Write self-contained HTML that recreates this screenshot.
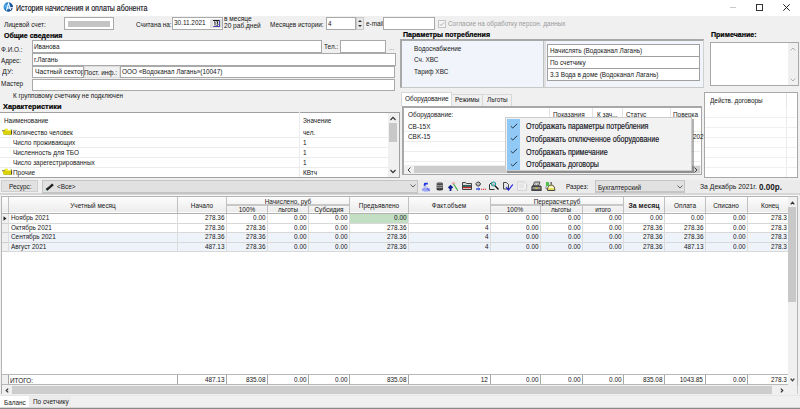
<!DOCTYPE html>
<html><head><meta charset="utf-8"><style>
html,body{margin:0;padding:0;}
body{width:800px;height:409px;position:relative;overflow:hidden;background:#f0f0f0;font-family:"Liberation Sans",sans-serif;}
.r{position:absolute;}
.t{position:absolute;white-space:nowrap;}
</style></head><body>
<div class="r" style="left:0px;top:0px;width:800px;height:16px;background:#fff;"></div>
<svg class="r" style="left:3px;top:2px" width="11" height="11" viewBox="0 0 11 11">
<defs><radialGradient id="ig" cx="25%" cy="40%" r="80%"><stop offset="0" stop-color="#5ab8f0"/><stop offset="0.5" stop-color="#1a70c0"/><stop offset="1" stop-color="#082a68"/></radialGradient></defs>
<circle cx="5.25" cy="5.05" r="4.7" fill="url(#ig)"/>
<path d="M3.4 8.3 L5.5 1.4 L7.6 8" stroke="#e8f4ff" stroke-width="1.2" fill="none"/>
<path d="M4 6.1 L9.9 5.6" stroke="#e8f4ff" stroke-width="1.1" fill="none"/>
</svg>
<div class="t" style="left:16px;top:4.19px;font-size:8.6px;line-height:8.6px;font-weight:400;color:#101018;transform:scaleX(0.815);transform-origin:0 0;-webkit-text-stroke:0.15px #101018;">История начисления и оплаты абонента</div>
<div class="r" style="left:730px;top:7px;width:6px;height:1px;background:#c8c8c8;"></div>
<div class="r" style="left:756px;top:4px;width:7px;height:7px;border:1px solid #333;box-sizing:border-box;"></div>
<svg class="r" style="left:783px;top:4px" width="7" height="7" viewBox="0 0 7 7"><path d="M0.3 0.3L6.7 6.7M6.7 0.3L0.3 6.7" stroke="#222" stroke-width="1"/></svg>
<div class="t" style="left:4px;top:20.50px;font-size:8px;line-height:8px;font-weight:400;color:#161616;transform:scaleX(0.8);transform-origin:0 0;">Лицевой счет:</div>
<div class="r" style="left:64px;top:17px;width:50px;height:13px;background:#fff;border:1px solid #a9a9a9;box-sizing:border-box;"></div>
<div class="r" style="left:68px;top:21px;width:42px;height:6px;background:#c4c4c4;"></div>
<div class="t" style="left:136px;top:20.50px;font-size:8px;line-height:8px;font-weight:400;color:#161616;transform:scaleX(0.8);transform-origin:0 0;">Считана на:</div>
<div class="r" style="left:172px;top:17px;width:51px;height:13px;background:#fff;border:1px solid #a9a9a9;box-sizing:border-box;"></div>
<div class="t" style="left:174px;top:19.20px;font-size:8px;line-height:8px;font-weight:400;color:#161616;transform:scaleX(0.8);transform-origin:0 0;">30.11.2021</div>
<div class="r" style="left:210px;top:18.5px;width:12px;height:9.5px;background:#e2e2e2;"></div>
<svg class="r" style="left:212px;top:19px" width="9" height="9" viewBox="0 0 9 9"><rect x="1" y="1" width="6.5" height="1" fill="#181818"/><rect x="1" y="2" width="6.5" height="5.5" fill="#f8f8f8"/><path d="M7.5 1.5 L7.5 7.5 L1.2 7.5" stroke="#4848b0" stroke-width="1.1" fill="none"/><path d="M2.2 3.2 L3 2.6 L3 6.6 M4.4 2.8 L6 2.8 L5 4.4 Q6.4 4.6 6 5.9 Q5.4 6.9 4.3 6.3" stroke="#101010" stroke-width="0.9" fill="none"/></svg>
<div class="t" style="left:224px;top:15.20px;font-size:8px;line-height:8px;font-weight:400;color:#161616;transform:scaleX(0.82);transform-origin:0 0;">в месяце</div>
<div class="t" style="left:224px;top:22.20px;font-size:8px;line-height:8px;font-weight:400;color:#161616;transform:scaleX(0.82);transform-origin:0 0;">20 раб.дней</div>
<div class="t" style="left:270px;top:20.70px;font-size:8px;line-height:8px;font-weight:400;color:#161616;transform:scaleX(0.8);transform-origin:0 0;">Месяцев истории:</div>
<div class="r" style="left:326px;top:17px;width:30px;height:13px;background:#fff;border:1px solid #a9a9a9;box-sizing:border-box;"></div>
<div class="t" style="left:328px;top:19.70px;font-size:8px;line-height:8px;font-weight:400;color:#161616;transform:scaleX(0.8);transform-origin:0 0;">4</div>
<div class="r" style="left:356px;top:17px;width:8px;height:13px;background:#e8e8e8;border:1px solid #c8c8c8;box-sizing:border-box;"></div>
<svg class="r" style="left:357px;top:18px" width="6" height="11" viewBox="0 0 6 11"><path d="M1 4L3 2L5 4Z M1 7L3 9L5 7Z" fill="#333"/></svg>
<div class="t" style="left:366px;top:20.20px;font-size:8px;line-height:8px;font-weight:400;color:#161616;transform:scaleX(0.8);transform-origin:0 0;">e-mail:</div>
<div class="r" style="left:383px;top:17px;width:52px;height:13px;background:#fff;border:1px solid #a9a9a9;box-sizing:border-box;"></div>
<div class="r" style="left:438px;top:20px;width:8px;height:8px;border:1px solid #c4c4c4;box-sizing:border-box;background:#f4f4f4;"></div>
<svg class="r" style="left:439px;top:21px" width="6" height="6" viewBox="0 0 6 6"><path d="M0.8 3L2.3 4.6L5.3 1.2" stroke="#b0b0b0" stroke-width="0.9" fill="none"/></svg>
<div class="t" style="left:448px;top:20.20px;font-size:8px;line-height:8px;font-weight:400;color:#9a9a9a;transform:scaleX(0.8);transform-origin:0 0;">Согласие на обработку персон. данных</div>
<div class="t" style="left:4px;top:32.20px;font-size:8px;line-height:8px;font-weight:700;color:#000;transform:scaleX(0.87);transform-origin:0 0;-webkit-text-stroke:0.2px #000;">Общие сведения</div>
<div class="t" style="left:403px;top:31.00px;font-size:8px;line-height:8px;font-weight:700;color:#000;transform:scaleX(0.88);transform-origin:0 0;-webkit-text-stroke:0.2px #000;">Параметры потребления</div>
<div class="t" style="left:711px;top:30.70px;font-size:8px;line-height:8px;font-weight:700;color:#000;transform:scaleX(0.88);transform-origin:0 0;-webkit-text-stroke:0.2px #000;">Примечание:</div>
<div class="t" style="left:1px;top:45.70px;font-size:8px;line-height:8px;font-weight:400;color:#161616;transform:scaleX(0.8);transform-origin:0 0;">Ф.И.О.:</div>
<div class="r" style="left:32px;top:40px;width:290px;height:13px;background:#fff;border:1px solid #a9a9a9;box-sizing:border-box;"></div>
<div class="t" style="left:34px;top:42.90px;font-size:8px;line-height:8px;font-weight:400;color:#161616;transform:scaleX(0.8);transform-origin:0 0;">Иванова</div>
<div class="t" style="left:324px;top:43.20px;font-size:8px;line-height:8px;font-weight:400;color:#161616;transform:scaleX(0.8);transform-origin:0 0;">Тел.:</div>
<div class="r" style="left:340px;top:40px;width:46px;height:13px;background:#fff;border:1px solid #a9a9a9;box-sizing:border-box;"></div>
<div class="t" style="left:389px;top:43.70px;font-size:8px;line-height:8px;font-weight:400;color:#808080;transform:scaleX(0.8);transform-origin:0 0;">...</div>
<div class="t" style="left:1px;top:57.10px;font-size:8px;line-height:8px;font-weight:400;color:#161616;transform:scaleX(0.8);transform-origin:0 0;">Адрес:</div>
<div class="r" style="left:32px;top:53px;width:364px;height:13px;background:#fff;border:1px solid #a9a9a9;box-sizing:border-box;"></div>
<div class="t" style="left:34px;top:55.90px;font-size:8px;line-height:8px;font-weight:400;color:#161616;transform:scaleX(0.8);transform-origin:0 0;">г.Лагань</div>
<div class="t" style="left:1.5px;top:68.20px;font-size:8px;line-height:8px;font-weight:400;color:#161616;transform:scaleX(0.9);transform-origin:0 0;">ДУ:</div>
<div class="r" style="left:32px;top:66px;width:52px;height:12px;background:#fff;border:1px solid #a9a9a9;box-sizing:border-box;"></div>
<div class="r" style="left:33px;top:67px;width:50px;height:10px;overflow:hidden">
<div class="t" style="left:1.5px;top:1.30px;font-size:8px;line-height:8px;font-weight:400;color:#161616;transform:scaleX(0.84);transform-origin:0 0;">Частный сектор</div>
</div>
<div class="r" style="left:84px;top:66px;width:36px;height:12px;border:1px solid #dcdcdc;box-sizing:border-box;"></div>
<div class="t" style="left:84px;top:68.70px;font-size:8px;line-height:8px;font-weight:400;color:#161616;transform:scaleX(0.8);transform-origin:0 0;">Пост. инф.:</div>
<div class="r" style="left:120px;top:66px;width:275px;height:12px;background:#fff;border:1px solid #a9a9a9;box-sizing:border-box;"></div>
<div class="t" style="left:122px;top:68.20px;font-size:8px;line-height:8px;font-weight:400;color:#161616;transform:scaleX(0.8);transform-origin:0 0;">ООО «Водоканал Лагань»(10047)</div>
<div class="t" style="left:1.3px;top:80.00px;font-size:8px;line-height:8px;font-weight:400;color:#161616;transform:scaleX(0.8);transform-origin:0 0;">Мастер</div>
<div class="r" style="left:32px;top:79px;width:363px;height:12px;background:#fff;border:1px solid #a9a9a9;box-sizing:border-box;"></div>
<div class="t" style="left:12.5px;top:92.20px;font-size:8px;line-height:8px;font-weight:400;color:#161616;transform:scaleX(0.8);transform-origin:0 0;">К групповому счетчику не подключен</div>
<div class="t" style="left:3px;top:103.10px;font-size:8px;line-height:8px;font-weight:700;color:#000;transform:scaleX(0.92);transform-origin:0 0;-webkit-text-stroke:0.2px #000;">Характеристики</div>
<div class="r" style="left:0px;top:112px;width:400px;height:66px;background:#fff;border-top:1px solid #a0a0a0;border-right:1px solid #a0a0a0;border-bottom:1px solid #a0a0a0;box-sizing:border-box;"></div>
<div class="r" style="left:299px;top:112px;width:1px;height:65px;background:#ececec;"></div>
<div class="t" style="left:4px;top:117.20px;font-size:8px;line-height:8px;font-weight:400;color:#161616;transform:scaleX(0.8);transform-origin:0 0;">Наименование</div>
<div class="t" style="left:303px;top:116.70px;font-size:8px;line-height:8px;font-weight:400;color:#161616;transform:scaleX(0.8);transform-origin:0 0;">Значение</div>
<div class="r" style="left:0px;top:137px;width:388px;height:1px;background:#ececec;"></div>
<div class="r" style="left:0px;top:147px;width:388px;height:1px;background:#ececec;"></div>
<div class="r" style="left:0px;top:157px;width:388px;height:1px;background:#ececec;"></div>
<div class="r" style="left:0px;top:167px;width:388px;height:1px;background:#ececec;"></div>
<svg class="r" style="left:2px;top:127.7px" width="11" height="7" viewBox="0 0 11 7"><ellipse cx="4.2" cy="1.6" rx="1.9" ry="1.2" fill="#f0ec30"/><path d="M0.3 2.6 L9.5 2.6 L9.5 6.6 L1.5 6.6 Z" fill="#dcd400"/><path d="M0 2.6 L3 2.6" stroke="#707050" stroke-width="0.8"/><path d="M9.6 1.6 L9.6 6.6" stroke="#303020" stroke-width="0.9"/><circle cx="8.6" cy="2.2" r="0.8" fill="#f0ec30"/><path d="M1.5 6.6 L9.5 6.6" stroke="#a8a000" stroke-width="0.6"/></svg>
<div class="t" style="left:13px;top:128.70px;font-size:8px;line-height:8px;font-weight:400;color:#161616;transform:scaleX(0.8);transform-origin:0 0;">Количество человек</div>
<div class="t" style="left:303px;top:128.70px;font-size:8px;line-height:8px;font-weight:400;color:#161616;transform:scaleX(0.8);transform-origin:0 0;">чел.</div>
<div class="t" style="left:13px;top:138.70px;font-size:8px;line-height:8px;font-weight:400;color:#161616;transform:scaleX(0.8);transform-origin:0 0;">Число проживающих</div>
<div class="t" style="left:303px;top:138.70px;font-size:8px;line-height:8px;font-weight:400;color:#161616;transform:scaleX(0.8);transform-origin:0 0;">1</div>
<div class="t" style="left:13px;top:148.70px;font-size:8px;line-height:8px;font-weight:400;color:#161616;transform:scaleX(0.8);transform-origin:0 0;">Численность для ТБО</div>
<div class="t" style="left:303px;top:148.70px;font-size:8px;line-height:8px;font-weight:400;color:#161616;transform:scaleX(0.8);transform-origin:0 0;">1</div>
<div class="t" style="left:13px;top:158.70px;font-size:8px;line-height:8px;font-weight:400;color:#161616;transform:scaleX(0.8);transform-origin:0 0;">Число зарегестрированных</div>
<div class="t" style="left:303px;top:158.70px;font-size:8px;line-height:8px;font-weight:400;color:#161616;transform:scaleX(0.8);transform-origin:0 0;">1</div>
<svg class="r" style="left:2px;top:167.7px" width="11" height="7" viewBox="0 0 11 7"><ellipse cx="4.2" cy="1.6" rx="1.9" ry="1.2" fill="#f0ec30"/><path d="M0.3 2.6 L9.5 2.6 L9.5 6.6 L1.5 6.6 Z" fill="#dcd400"/><path d="M0 2.6 L3 2.6" stroke="#707050" stroke-width="0.8"/><path d="M9.6 1.6 L9.6 6.6" stroke="#303020" stroke-width="0.9"/><circle cx="8.6" cy="2.2" r="0.8" fill="#f0ec30"/><path d="M1.5 6.6 L9.5 6.6" stroke="#a8a000" stroke-width="0.6"/></svg>
<div class="t" style="left:13px;top:168.70px;font-size:8px;line-height:8px;font-weight:400;color:#161616;transform:scaleX(0.8);transform-origin:0 0;">Прочие</div>
<div class="t" style="left:303px;top:168.70px;font-size:8px;line-height:8px;font-weight:400;color:#161616;transform:scaleX(0.8);transform-origin:0 0;">КВтч</div>
<div class="r" style="left:388px;top:113px;width:11px;height:64px;background:#f0f0f0;"></div>
<div class="r" style="left:389px;top:123px;width:8px;height:19px;background:#c8c8c8;"></div>
<svg class="r" style="left:390px;top:116px" width="6" height="5" viewBox="0 0 6 5"><path d="M0.5 4L3 1.3L5.5 4" stroke="#333" stroke-width="1.2" fill="none"/></svg>
<svg class="r" style="left:390px;top:169px" width="6" height="5" viewBox="0 0 6 5"><path d="M0.5 1L3 3.7L5.5 1" stroke="#333" stroke-width="1.2" fill="none"/></svg>
<div class="r" style="left:400px;top:39px;width:304px;height:49px;background:#f1f5fb;border-top:2px solid #a8a8a8;border-left:2px solid #a8a8a8;border-bottom:1px solid #c8c8c8;border-right:1px solid #d0d0d0;box-sizing:border-box;"></div>
<div class="t" style="left:414px;top:44.70px;font-size:8px;line-height:8px;font-weight:400;color:#161616;transform:scaleX(0.8);transform-origin:0 0;">Водоснабжение</div>
<div class="t" style="left:414px;top:56.20px;font-size:8px;line-height:8px;font-weight:400;color:#161616;transform:scaleX(0.8);transform-origin:0 0;">Сч. ХВС</div>
<div class="t" style="left:414px;top:67.70px;font-size:8px;line-height:8px;font-weight:400;color:#161616;transform:scaleX(0.8);transform-origin:0 0;">Тариф ХВС</div>
<div class="r" style="left:543px;top:41px;width:3px;height:46px;background:#e0e0e0;border-left:1px solid #c0c0c0;box-sizing:border-box;"></div>
<div class="r" style="left:547px;top:44px;width:153px;height:37px;background:#fff;border:1px solid #a0a0a0;box-sizing:border-box;"></div>
<div class="r" style="left:547px;top:56px;width:153px;height:1px;background:#a0a0a0;"></div>
<div class="r" style="left:547px;top:68px;width:153px;height:1px;background:#a0a0a0;"></div>
<div class="t" style="left:550px;top:46.70px;font-size:8px;line-height:8px;font-weight:400;color:#161616;transform:scaleX(0.8);transform-origin:0 0;">Начислять (Водоканал Лагань)</div>
<div class="t" style="left:550px;top:58.70px;font-size:8px;line-height:8px;font-weight:400;color:#161616;transform:scaleX(0.8);transform-origin:0 0;">По счетчику</div>
<div class="t" style="left:550px;top:70.70px;font-size:8px;line-height:8px;font-weight:400;color:#161616;transform:scaleX(0.8);transform-origin:0 0;">3.3 Вода в доме (Водоканал Лагань)</div>
<div class="r" style="left:710px;top:42px;width:89px;height:44px;background:#fff;border:1px solid #a8a8a8;box-sizing:border-box;"></div>
<div class="r" style="left:788px;top:43px;width:10px;height:42px;background:#f0f0f0;"></div>
<svg class="r" style="left:790px;top:47px" width="6" height="4" viewBox="0 0 6 4"><path d="M0.5 3.5L3 1L5.5 3.5" stroke="#aaa" stroke-width="0.9" fill="none"/></svg>
<svg class="r" style="left:790px;top:78px" width="6" height="4" viewBox="0 0 6 4"><path d="M0.5 0.5L3 3L5.5 0.5" stroke="#aaa" stroke-width="0.9" fill="none"/></svg>
<div class="r" style="left:401px;top:92px;width:51px;height:14px;background:#fff;border:1px solid #d8d8d8;border-bottom:none;box-sizing:border-box;"></div>
<div class="t" style="left:405px;top:95.20px;font-size:8px;line-height:8px;font-weight:400;color:#161616;transform:scaleX(0.8);transform-origin:0 0;">Оборудование</div>
<div class="r" style="left:452px;top:94px;width:31px;height:12px;background:#f0f0f0;border:1px solid #d8d8d8;border-bottom:none;border-left:none;box-sizing:border-box;"></div>
<div class="t" style="left:455px;top:95.70px;font-size:8px;line-height:8px;font-weight:400;color:#161616;transform:scaleX(0.8);transform-origin:0 0;">Режимы</div>
<div class="r" style="left:483px;top:94px;width:29px;height:12px;background:#f0f0f0;border:1px solid #d8d8d8;border-bottom:none;border-left:none;box-sizing:border-box;"></div>
<div class="t" style="left:487px;top:95.70px;font-size:8px;line-height:8px;font-weight:400;color:#161616;transform:scaleX(0.8);transform-origin:0 0;">Льготы</div>
<div class="r" style="left:402px;top:106px;width:300px;height:69px;background:#fff;border:2px solid #a8a8a8;border-right-width:1px;border-bottom-width:1px;box-sizing:border-box;"></div>
<div class="t" style="left:407.5px;top:111.20px;font-size:8px;line-height:8px;font-weight:400;color:#161616;transform:scaleX(0.8);transform-origin:0 0;">Оборудование:</div>
<div class="r" style="left:549px;top:108px;width:1px;height:13px;background:#e4e4e4;"></div>
<div class="r" style="left:592px;top:108px;width:1px;height:13px;background:#e4e4e4;"></div>
<div class="r" style="left:622px;top:108px;width:1px;height:13px;background:#e4e4e4;"></div>
<div class="r" style="left:670px;top:108px;width:1px;height:13px;background:#e4e4e4;"></div>
<div class="t" style="left:552.5px;top:111.20px;font-size:8px;line-height:8px;font-weight:400;color:#161616;transform:scaleX(0.8);transform-origin:0 0;">Показания</div>
<div class="t" style="left:597px;top:111.20px;font-size:8px;line-height:8px;font-weight:400;color:#161616;transform:scaleX(0.8);transform-origin:0 0;">К зач...</div>
<div class="t" style="left:626px;top:111.20px;font-size:8px;line-height:8px;font-weight:400;color:#161616;transform:scaleX(0.8);transform-origin:0 0;">Статус</div>
<div class="t" style="left:673px;top:111.20px;font-size:8px;line-height:8px;font-weight:400;color:#161616;transform:scaleX(0.8);transform-origin:0 0;">Поверка</div>
<div class="t" style="left:407.5px;top:123.20px;font-size:8px;line-height:8px;font-weight:400;color:#161616;transform:scaleX(0.8);transform-origin:0 0;">CB-15X</div>
<div class="t" style="left:407.5px;top:133.20px;font-size:8px;line-height:8px;font-weight:400;color:#161616;transform:scaleX(0.8);transform-origin:0 0;">CBK-15</div>
<div class="r" style="left:404px;top:131px;width:296px;height:1px;background:#ececec;"></div>
<div class="r" style="left:404px;top:141px;width:296px;height:1px;background:#ececec;"></div>
<div class="r" style="left:404px;top:151px;width:296px;height:1px;background:#ececec;"></div>
<div class="r" style="left:404px;top:161px;width:296px;height:1px;background:#ececec;"></div>
<div class="t" style="left:692.5px;top:132.70px;font-size:8px;line-height:8px;font-weight:400;color:#161616;transform:scaleX(0.8);transform-origin:0 0;">2021</div>
<div class="r" style="left:404px;top:165px;width:297px;height:9px;background:#f0f0f0;"></div>
<div class="r" style="left:414px;top:166px;width:286px;height:7px;background:#cdcdcd;"></div>
<svg class="r" style="left:407px;top:167px" width="4" height="6" viewBox="0 0 4 6"><path d="M3.5 0.5L1 3L3.5 5.5" stroke="#444" stroke-width="1" fill="none"/></svg>
<svg class="r" style="left:694px;top:167px" width="4" height="6" viewBox="0 0 4 6"><path d="M0.5 0.5L3 3L0.5 5.5" stroke="#444" stroke-width="1" fill="none"/></svg>
<div class="r" style="left:704px;top:92px;width:94px;height:86px;background:#fff;border:1px solid #a8a8a8;box-sizing:border-box;"></div>
<div class="t" style="left:709.5px;top:96.50px;font-size:8px;line-height:8px;font-weight:400;color:#161616;transform:scaleX(0.8);transform-origin:0 0;">Действ. договоры</div>
<div class="r" style="left:786px;top:93px;width:1px;height:14px;background:#e4e4e4;"></div>
<div class="r" style="left:786px;top:107px;width:1px;height:70px;background:#ebebeb;"></div>
<div class="r" style="left:705px;top:117px;width:92px;height:1px;background:#f0f0f0;"></div>
<div class="r" style="left:705px;top:127px;width:92px;height:1px;background:#f0f0f0;"></div>
<div class="r" style="left:705px;top:137px;width:92px;height:1px;background:#f0f0f0;"></div>
<div class="r" style="left:705px;top:147px;width:92px;height:1px;background:#f0f0f0;"></div>
<div class="r" style="left:705px;top:157px;width:92px;height:1px;background:#f0f0f0;"></div>
<div class="r" style="left:705px;top:167px;width:92px;height:1px;background:#f0f0f0;"></div>
<div class="r" style="left:507px;top:119px;width:187px;height:54px;background:rgba(0,0,0,0.3);"></div>
<div class="r" style="left:505px;top:117px;width:187px;height:54px;background:#f2f2f2;border:1px solid #cccccc;box-sizing:border-box;"></div>
<div class="r" style="left:507px;top:119px;width:13px;height:51px;background:#90c8f6;"></div>
<svg class="r" style="left:510px;top:122.5px" width="8" height="6" viewBox="0 0 8 6"><path d="M0.8 3.2L2.8 5L7.2 0.8" stroke="#2a3a4a" stroke-width="1" fill="none"/></svg>
<div class="t" style="left:525.5px;top:121.78px;font-size:8.5px;line-height:8.5px;font-weight:400;color:#101020;transform:scaleX(0.832);transform-origin:0 0;-webkit-text-stroke:0.15px #101020;">Отображать параметры потребления</div>
<svg class="r" style="left:510px;top:135.4px" width="8" height="6" viewBox="0 0 8 6"><path d="M0.8 3.2L2.8 5L7.2 0.8" stroke="#2a3a4a" stroke-width="1" fill="none"/></svg>
<div class="t" style="left:525.5px;top:134.68px;font-size:8.5px;line-height:8.5px;font-weight:400;color:#101020;transform:scaleX(0.832);transform-origin:0 0;-webkit-text-stroke:0.15px #101020;">Отображать отключенное оборудование</div>
<svg class="r" style="left:510px;top:148.3px" width="8" height="6" viewBox="0 0 8 6"><path d="M0.8 3.2L2.8 5L7.2 0.8" stroke="#2a3a4a" stroke-width="1" fill="none"/></svg>
<div class="t" style="left:525.5px;top:147.58px;font-size:8.5px;line-height:8.5px;font-weight:400;color:#101020;transform:scaleX(0.832);transform-origin:0 0;-webkit-text-stroke:0.15px #101020;">Отображать примечание</div>
<svg class="r" style="left:510px;top:161.2px" width="8" height="6" viewBox="0 0 8 6"><path d="M0.8 3.2L2.8 5L7.2 0.8" stroke="#2a3a4a" stroke-width="1" fill="none"/></svg>
<div class="t" style="left:525.5px;top:160.47px;font-size:8.5px;line-height:8.5px;font-weight:400;color:#101020;transform:scaleX(0.832);transform-origin:0 0;-webkit-text-stroke:0.15px #101020;">Отображать договоры</div>
<div class="r" style="left:0px;top:192.5px;width:800px;height:2.0px;background:#d6d6d6;"></div>
<div class="r" style="left:418px;top:180px;width:382px;height:12.5px;background:#ebebeb;"></div>
<div class="r" style="left:1px;top:180px;width:37px;height:12px;background:#e1e1e1;border:1px solid #cfcfcf;box-sizing:border-box;"></div>
<div class="t" style="left:8.5px;top:182.70px;font-size:8px;line-height:8px;font-weight:400;color:#161616;transform:scaleX(0.8);transform-origin:0 0;">Ресурс:</div>
<div class="r" style="left:42px;top:180px;width:376px;height:14px;background:#e1e1e1;border:1px solid #c4c4c4;border-bottom-width:2px;box-sizing:border-box;"></div>
<svg class="r" style="left:44px;top:182px" width="11" height="10" viewBox="0 0 11 10"><path d="M1.6 8.6 L8 3" stroke="#a8e0a8" stroke-width="1.2"/><path d="M2.5 7.9 L9 2.3" stroke="#1e1e1e" stroke-width="2.4"/><path d="M4.3 5.6 L6.8 3.5" stroke="#707070" stroke-width="0.5"/></svg>
<div class="t" style="left:56.5px;top:183.20px;font-size:8px;line-height:8px;font-weight:400;color:#161616;transform:scaleX(0.8);transform-origin:0 0;">&lt;Все&gt;</div>
<svg class="r" style="left:410px;top:184px" width="6" height="4" viewBox="0 0 6 4"><path d="M0.5 0.5L3 3L5.5 0.5" stroke="#555" stroke-width="0.9" fill="none"/></svg>
<svg class="r" style="left:421px;top:182px" width="10" height="10" viewBox="0 0 10 10"><path d="M2.8 4.2 L2.8 2.2 Q2.8 0.8 4.5 0.8 L6.8 0.8 L6.8 2.5 L4.6 2.5 L4.6 4.2 Z" fill="#1a30e0"/><ellipse cx="5" cy="7.4" rx="4.2" ry="2" fill="#9aa4f4"/><ellipse cx="4.5" cy="4.8" rx="1.6" ry="1.4" fill="#c0c4f0"/><path d="M6.2 6.5 L8.5 8.8" stroke="#3040e0" stroke-width="1"/></svg>
<svg class="r" style="left:436px;top:182px" width="8" height="9" viewBox="0 0 8 9"><ellipse cx="3.8" cy="1.6" rx="3.2" ry="1.3" fill="#707070"/><rect x="0.6" y="1.6" width="6.4" height="5.6" fill="#4a4a4a"/><ellipse cx="3.8" cy="7.2" rx="3.2" ry="1.2" fill="#3a3a3a"/><path d="M0.8 3.3 Q3.8 4.5 6.8 3.3 M0.8 5.2 Q3.8 6.4 6.8 5.2" stroke="#c8c8c8" stroke-width="0.7" fill="none"/></svg>
<svg class="r" style="left:448px;top:182px" width="11" height="9" viewBox="0 0 11 9"><path d="M2.5 9 L2.5 5 M0.5 6 L2.5 4 L4.5 6" stroke="#102090" stroke-width="1.8" fill="none"/><path d="M4 2 L5.5 0.5 L7 2" stroke="#f0a0a0" stroke-width="1.3" fill="none"/><path d="M5.5 2 L9.5 8" stroke="#40b040" stroke-width="1.2"/><path d="M9.5 8.5 L10 9" stroke="#303030" stroke-width="1"/></svg>
<svg class="r" style="left:462px;top:181px" width="10" height="9" viewBox="0 0 10 9"><path d="M0.5 1.5 L3.5 1.5 L4.5 2.5 L9.5 2.5 L9.5 8.5 L0.5 8.5 Z" fill="#d8d8d8" stroke="#303030" stroke-width="0.9"/><rect x="1" y="4" width="8" height="2" fill="#306060"/><rect x="1" y="6" width="8" height="1.2" fill="#d02020"/></svg>
<svg class="r" style="left:475px;top:181px" width="12" height="10" viewBox="0 0 12 10"><path d="M1 2.5 L2.5 1 L4 1 L5.5 2.5 L5 4.2 L3 5.2 L1.2 4 Z" fill="#c8c8c8" stroke="#2a2a2a" stroke-width="0.9"/><path d="M2 4.5 L4.5 2" stroke="#888" stroke-width="0.6"/><path d="M1 8 L4.5 8" stroke="#2040e0" stroke-width="1.3"/><path d="M3.5 6.8 L5 8 L3.5 9.2" stroke="#2040e0" stroke-width="0.8" fill="none"/><path d="M6 8.3 L11.5 8.3" stroke="#e02020" stroke-width="1.1" stroke-dasharray="1.2 0.7"/></svg>
<svg class="r" style="left:488px;top:181px" width="12" height="10" viewBox="0 0 12 10"><path d="M1.5 3.5 L3 2 L5 2 M1.5 3.5 L1.5 8.5 L6.5 8.5" stroke="#303030" stroke-width="1" fill="#e8e8e8"/><circle cx="5.5" cy="3" r="2" fill="#e0e0e0" stroke="#20a0a0" stroke-width="1.2"/><circle cx="5.3" cy="3.2" r="0.5" fill="#c04040"/><path d="M7 4.8 L10.5 8.5" stroke="#101010" stroke-width="1.3"/></svg>
<svg class="r" style="left:502px;top:181px" width="12" height="10" viewBox="0 0 12 10"><path d="M1.5 1.5 L4.5 1.5 L6.5 3.5 L6.5 8 L1.5 8 Z" fill="#e4e4e4" stroke="#353535" stroke-width="0.9"/><path d="M4.3 6.2 L6.5 9 L10.8 3.5" stroke="#1a1ae0" stroke-width="1.2" fill="none"/></svg>
<svg class="r" style="left:516px;top:181px" width="12" height="10" viewBox="0 0 12 10"><path d="M1.5 0.8 L8 0.8 L10.5 3 L10.5 9.3 L1.5 9.3 Z" fill="#f2f2f2" stroke="#cfcfcf" stroke-width="0.9"/><path d="M3 3 L8 3 M3 4.8 L8 4.8 M3 6.6 L8 6.6" stroke="#d8d8d8" stroke-width="0.8"/><path d="M10.5 4.5 L11.5 5" stroke="#bbb" stroke-width="0.8"/></svg>
<svg class="r" style="left:531px;top:181px" width="11" height="10" viewBox="0 0 11 10"><path d="M3.5 1 L9 1 L7.5 5 L2 5 Z" fill="#d0d0d0" stroke="#404040" stroke-width="0.9"/><path d="M5 2.2 L4.3 4 M7 2.2 L6.3 4" stroke="#888" stroke-width="0.6"/><path d="M1 5 L10 5 L10.3 9.5 L0.7 9.5 Z" fill="#5a5a5a" stroke="#2a2a2a" stroke-width="0.8"/><path d="M1.5 7 L9.5 7" stroke="#d8d8d8" stroke-width="0.9"/><rect x="4.5" y="6.6" width="2" height="1.2" fill="#e8e020"/></svg>
<svg class="r" style="left:545px;top:181px" width="11" height="11" viewBox="0 0 11 11"><path d="M1 1 L4 1 L4 5 L1 5 Z" fill="#50c050"/><path d="M1 5 L1 8 L2.5 8" stroke="#606060" stroke-width="0.7" fill="none"/><path d="M5.5 1 L6.8 1 L6.8 3.5 L5.5 3.5 Z" fill="#505050"/><path d="M2.5 9.5 Q2.5 4 6.2 4 Q9.8 4 9.8 9.5 Z" fill="#f0e860" stroke="#353535" stroke-width="0.9"/><path d="M3.8 7 Q6.2 4.8 8.5 7" stroke="#fff" stroke-width="1.1" fill="none"/><path d="M3 8.3 L9.3 8.3" stroke="#c8c040" stroke-width="0.6"/></svg>
<div class="t" style="left:566px;top:183.20px;font-size:8px;line-height:8px;font-weight:400;color:#161616;transform:scaleX(0.8);transform-origin:0 0;">Разрез:</div>
<div class="r" style="left:595px;top:180px;width:90px;height:13px;background:#e1e1e1;border:1px solid #c4c4c4;border-bottom-width:2px;box-sizing:border-box;"></div>
<div class="t" style="left:597.5px;top:183.90px;font-size:8px;line-height:8px;font-weight:400;color:#161616;transform:scaleX(0.8);transform-origin:0 0;">Бухгалтерский</div>
<svg class="r" style="left:677px;top:185px" width="6" height="4" viewBox="0 0 6 4"><path d="M0.5 0.5L3 3L5.5 0.5" stroke="#555" stroke-width="0.9" fill="none"/></svg>
<div class="t" style="left:699.5px;top:183.10px;font-size:8px;line-height:8px;font-weight:400;color:#161616;transform:scaleX(0.85);transform-origin:0 0;">За Декабрь 2021г.</div>
<div class="t" style="left:759px;top:183.15px;font-size:9px;line-height:9px;font-weight:700;color:#161616;transform:scaleX(0.9);transform-origin:0 0;">0.00р.</div>
<div class="r" style="left:1px;top:196px;width:797px;height:189px;background:#fff;border:1px solid #b4b4b4;border-bottom:none;box-sizing:border-box;"></div>
<div class="r" style="left:1px;top:195px;width:797px;height:1px;background:#f8f8f8;"></div>
<div class="r" style="left:2px;top:197px;width:786px;height:15px;background:linear-gradient(#fdfdfd,#ececec);"></div>
<div class="r" style="left:2px;top:213px;width:786px;height:1px;background:#b0b0b0;"></div>
<div class="r" style="left:226px;top:204px;width:123px;height:2px;background:#c8c8c8;"></div>
<div class="r" style="left:490px;top:204px;width:133px;height:2px;background:#c8c8c8;"></div>
<div class="r" style="left:8px;top:197px;width:1px;height:16px;background:#c0c0c0;"></div>
<div class="r" style="left:177px;top:197px;width:1px;height:16px;background:#c0c0c0;"></div>
<div class="r" style="left:226px;top:197px;width:1px;height:16px;background:#c0c0c0;"></div>
<div class="r" style="left:267px;top:205px;width:1px;height:8px;background:#c0c0c0;"></div>
<div class="r" style="left:308px;top:205px;width:1px;height:8px;background:#c0c0c0;"></div>
<div class="r" style="left:349px;top:197px;width:1px;height:16px;background:#c0c0c0;"></div>
<div class="r" style="left:408px;top:197px;width:1px;height:16px;background:#c0c0c0;"></div>
<div class="r" style="left:490px;top:197px;width:1px;height:16px;background:#c0c0c0;"></div>
<div class="r" style="left:540px;top:205px;width:1px;height:8px;background:#c0c0c0;"></div>
<div class="r" style="left:582px;top:205px;width:1px;height:8px;background:#c0c0c0;"></div>
<div class="r" style="left:623px;top:197px;width:1px;height:16px;background:#c0c0c0;"></div>
<div class="r" style="left:664px;top:197px;width:1px;height:16px;background:#c0c0c0;"></div>
<div class="r" style="left:705px;top:197px;width:1px;height:16px;background:#c0c0c0;"></div>
<div class="r" style="left:747px;top:197px;width:1px;height:16px;background:#c0c0c0;"></div>
<div class="t" style="left:92.5px;top:202.20px;font-size:8px;line-height:8px;font-weight:400;color:#161616;transform:translateX(-50%) scaleX(0.8);transform-origin:50% 0;">Учетный месяц</div>
<div class="t" style="left:201.5px;top:202.20px;font-size:8px;line-height:8px;font-weight:400;color:#161616;transform:translateX(-50%) scaleX(0.8);transform-origin:50% 0;">Начало</div>
<div class="t" style="left:378.5px;top:202.20px;font-size:8px;line-height:8px;font-weight:400;color:#161616;transform:translateX(-50%) scaleX(0.8);transform-origin:50% 0;">Предъявлено</div>
<div class="t" style="left:449.0px;top:202.20px;font-size:8px;line-height:8px;font-weight:400;color:#161616;transform:translateX(-50%) scaleX(0.8);transform-origin:50% 0;">Факт.объем</div>
<div class="t" style="left:684.5px;top:202.20px;font-size:8px;line-height:8px;font-weight:400;color:#161616;transform:translateX(-50%) scaleX(0.8);transform-origin:50% 0;">Оплата</div>
<div class="t" style="left:726.0px;top:202.20px;font-size:8px;line-height:8px;font-weight:400;color:#161616;transform:translateX(-50%) scaleX(0.8);transform-origin:50% 0;">Списано</div>
<div class="t" style="left:769.5px;top:202.20px;font-size:8px;line-height:8px;font-weight:400;color:#161616;transform:translateX(-50%) scaleX(0.8);transform-origin:50% 0;">Конец</div>
<div class="t" style="left:644.0px;top:202.20px;font-size:8px;line-height:8px;font-weight:700;color:#202020;transform:translateX(-50%) scaleX(0.86);transform-origin:50% 0;">За месяц</div>
<div class="t" style="left:288px;top:197.70px;font-size:8px;line-height:8px;font-weight:400;color:#161616;transform:translateX(-50%) scaleX(0.8);transform-origin:50% 0;">Начислено, руб</div>
<div class="t" style="left:556.5px;top:197.70px;font-size:8px;line-height:8px;font-weight:400;color:#161616;transform:translateX(-50%) scaleX(0.8);transform-origin:50% 0;">Перерасчет,руб</div>
<div class="t" style="left:246.5px;top:205.70px;font-size:8px;line-height:8px;font-weight:400;color:#161616;transform:translateX(-50%) scaleX(0.8);transform-origin:50% 0;">100%</div>
<div class="t" style="left:287.5px;top:205.70px;font-size:8px;line-height:8px;font-weight:400;color:#161616;transform:translateX(-50%) scaleX(0.8);transform-origin:50% 0;">льготы</div>
<div class="t" style="left:328.5px;top:205.70px;font-size:8px;line-height:8px;font-weight:400;color:#161616;transform:translateX(-50%) scaleX(0.8);transform-origin:50% 0;">Субсидия</div>
<div class="t" style="left:515.0px;top:205.70px;font-size:8px;line-height:8px;font-weight:400;color:#161616;transform:translateX(-50%) scaleX(0.8);transform-origin:50% 0;">100%</div>
<div class="t" style="left:561.0px;top:205.70px;font-size:8px;line-height:8px;font-weight:400;color:#161616;transform:translateX(-50%) scaleX(0.8);transform-origin:50% 0;">льготы</div>
<div class="t" style="left:602.5px;top:205.70px;font-size:8px;line-height:8px;font-weight:400;color:#161616;transform:translateX(-50%) scaleX(0.8);transform-origin:50% 0;">итого</div>
<div class="r" style="left:350px;top:214px;width:58px;height:8.5px;background:#c3dfc3;"></div>
<div class="r" style="left:2px;top:222.5px;width:786px;height:1.0px;background:#d8d8d8;"></div>
<div class="r" style="left:8px;top:214px;width:1px;height:9.5px;background:#dcdcdc;"></div>
<div class="r" style="left:177px;top:214px;width:1px;height:9.5px;background:#dcdcdc;"></div>
<div class="r" style="left:226px;top:214px;width:1px;height:9.5px;background:#dcdcdc;"></div>
<div class="r" style="left:267px;top:214px;width:1px;height:9.5px;background:#dcdcdc;"></div>
<div class="r" style="left:308px;top:214px;width:1px;height:9.5px;background:#dcdcdc;"></div>
<div class="r" style="left:349px;top:214px;width:1px;height:9.5px;background:#dcdcdc;"></div>
<div class="r" style="left:408px;top:214px;width:1px;height:9.5px;background:#dcdcdc;"></div>
<div class="r" style="left:490px;top:214px;width:1px;height:9.5px;background:#dcdcdc;"></div>
<div class="r" style="left:540px;top:214px;width:1px;height:9.5px;background:#dcdcdc;"></div>
<div class="r" style="left:582px;top:214px;width:1px;height:9.5px;background:#dcdcdc;"></div>
<div class="r" style="left:623px;top:214px;width:1px;height:9.5px;background:#dcdcdc;"></div>
<div class="r" style="left:664px;top:214px;width:1px;height:9.5px;background:#dcdcdc;"></div>
<div class="r" style="left:705px;top:214px;width:1px;height:9.5px;background:#dcdcdc;"></div>
<div class="r" style="left:747px;top:214px;width:1px;height:9.5px;background:#dcdcdc;"></div>
<div class="t" style="left:10.5px;top:214.10px;font-size:8px;line-height:8px;font-weight:400;color:#161616;transform:scaleX(0.8);transform-origin:0 0;">Ноябрь 2021</div>
<div class="t" style="right:575.8px;top:214.10px;font-size:8px;line-height:8px;font-weight:400;color:#161616;transform:scaleX(0.8);transform-origin:100% 0;">278.36</div>
<div class="t" style="right:534.8px;top:214.10px;font-size:8px;line-height:8px;font-weight:400;color:#161616;transform:scaleX(0.8);transform-origin:100% 0;">0.00</div>
<div class="t" style="right:493.8px;top:214.10px;font-size:8px;line-height:8px;font-weight:400;color:#161616;transform:scaleX(0.8);transform-origin:100% 0;">0.00</div>
<div class="t" style="right:452.8px;top:214.10px;font-size:8px;line-height:8px;font-weight:400;color:#161616;transform:scaleX(0.8);transform-origin:100% 0;">0.00</div>
<div class="t" style="right:393.8px;top:214.10px;font-size:8px;line-height:8px;font-weight:400;color:#161616;transform:scaleX(0.8);transform-origin:100% 0;">0.00</div>
<div class="t" style="right:311.8px;top:214.10px;font-size:8px;line-height:8px;font-weight:400;color:#161616;transform:scaleX(0.8);transform-origin:100% 0;">0</div>
<div class="t" style="right:261.79999999999995px;top:214.10px;font-size:8px;line-height:8px;font-weight:400;color:#161616;transform:scaleX(0.8);transform-origin:100% 0;">0.00</div>
<div class="t" style="right:219.79999999999995px;top:214.10px;font-size:8px;line-height:8px;font-weight:400;color:#161616;transform:scaleX(0.8);transform-origin:100% 0;">0.00</div>
<div class="t" style="right:178.79999999999995px;top:214.10px;font-size:8px;line-height:8px;font-weight:400;color:#161616;transform:scaleX(0.8);transform-origin:100% 0;">0.00</div>
<div class="t" style="right:137.79999999999995px;top:214.10px;font-size:8px;line-height:8px;font-weight:400;color:#161616;transform:scaleX(0.8);transform-origin:100% 0;">0.00</div>
<div class="t" style="right:96.79999999999995px;top:214.10px;font-size:8px;line-height:8px;font-weight:400;color:#161616;transform:scaleX(0.8);transform-origin:100% 0;">0.00</div>
<div class="t" style="right:54.799999999999955px;top:214.10px;font-size:8px;line-height:8px;font-weight:400;color:#161616;transform:scaleX(0.8);transform-origin:100% 0;">0.00</div>
<div class="t" style="right:9.799999999999955px;top:214.10px;font-size:8px;line-height:8px;font-weight:400;color:#161616;transform:scaleX(0.8);transform-origin:100% 0;">278.36</div>
<div class="r" style="left:2px;top:232.2px;width:786px;height:1.0px;background:#d8d8d8;"></div>
<div class="r" style="left:8px;top:223.5px;width:1px;height:9.699999999999989px;background:#dcdcdc;"></div>
<div class="r" style="left:177px;top:223.5px;width:1px;height:9.699999999999989px;background:#dcdcdc;"></div>
<div class="r" style="left:226px;top:223.5px;width:1px;height:9.699999999999989px;background:#dcdcdc;"></div>
<div class="r" style="left:267px;top:223.5px;width:1px;height:9.699999999999989px;background:#dcdcdc;"></div>
<div class="r" style="left:308px;top:223.5px;width:1px;height:9.699999999999989px;background:#dcdcdc;"></div>
<div class="r" style="left:349px;top:223.5px;width:1px;height:9.699999999999989px;background:#dcdcdc;"></div>
<div class="r" style="left:408px;top:223.5px;width:1px;height:9.699999999999989px;background:#dcdcdc;"></div>
<div class="r" style="left:490px;top:223.5px;width:1px;height:9.699999999999989px;background:#dcdcdc;"></div>
<div class="r" style="left:540px;top:223.5px;width:1px;height:9.699999999999989px;background:#dcdcdc;"></div>
<div class="r" style="left:582px;top:223.5px;width:1px;height:9.699999999999989px;background:#dcdcdc;"></div>
<div class="r" style="left:623px;top:223.5px;width:1px;height:9.699999999999989px;background:#dcdcdc;"></div>
<div class="r" style="left:664px;top:223.5px;width:1px;height:9.699999999999989px;background:#dcdcdc;"></div>
<div class="r" style="left:705px;top:223.5px;width:1px;height:9.699999999999989px;background:#dcdcdc;"></div>
<div class="r" style="left:747px;top:223.5px;width:1px;height:9.699999999999989px;background:#dcdcdc;"></div>
<div class="t" style="left:10.5px;top:223.60px;font-size:8px;line-height:8px;font-weight:400;color:#161616;transform:scaleX(0.8);transform-origin:0 0;">Октябрь 2021</div>
<div class="t" style="right:575.8px;top:223.60px;font-size:8px;line-height:8px;font-weight:400;color:#161616;transform:scaleX(0.8);transform-origin:100% 0;">278.36</div>
<div class="t" style="right:534.8px;top:223.60px;font-size:8px;line-height:8px;font-weight:400;color:#161616;transform:scaleX(0.8);transform-origin:100% 0;">278.36</div>
<div class="t" style="right:493.8px;top:223.60px;font-size:8px;line-height:8px;font-weight:400;color:#161616;transform:scaleX(0.8);transform-origin:100% 0;">0.00</div>
<div class="t" style="right:452.8px;top:223.60px;font-size:8px;line-height:8px;font-weight:400;color:#161616;transform:scaleX(0.8);transform-origin:100% 0;">0.00</div>
<div class="t" style="right:393.8px;top:223.60px;font-size:8px;line-height:8px;font-weight:400;color:#161616;transform:scaleX(0.8);transform-origin:100% 0;">278.36</div>
<div class="t" style="right:311.8px;top:223.60px;font-size:8px;line-height:8px;font-weight:400;color:#161616;transform:scaleX(0.8);transform-origin:100% 0;">4</div>
<div class="t" style="right:261.79999999999995px;top:223.60px;font-size:8px;line-height:8px;font-weight:400;color:#161616;transform:scaleX(0.8);transform-origin:100% 0;">0.00</div>
<div class="t" style="right:219.79999999999995px;top:223.60px;font-size:8px;line-height:8px;font-weight:400;color:#161616;transform:scaleX(0.8);transform-origin:100% 0;">0.00</div>
<div class="t" style="right:178.79999999999995px;top:223.60px;font-size:8px;line-height:8px;font-weight:400;color:#161616;transform:scaleX(0.8);transform-origin:100% 0;">0.00</div>
<div class="t" style="right:137.79999999999995px;top:223.60px;font-size:8px;line-height:8px;font-weight:400;color:#161616;transform:scaleX(0.8);transform-origin:100% 0;">278.36</div>
<div class="t" style="right:96.79999999999995px;top:223.60px;font-size:8px;line-height:8px;font-weight:400;color:#161616;transform:scaleX(0.8);transform-origin:100% 0;">278.36</div>
<div class="t" style="right:54.799999999999955px;top:223.60px;font-size:8px;line-height:8px;font-weight:400;color:#161616;transform:scaleX(0.8);transform-origin:100% 0;">0.00</div>
<div class="t" style="right:9.799999999999955px;top:223.60px;font-size:8px;line-height:8px;font-weight:400;color:#161616;transform:scaleX(0.8);transform-origin:100% 0;">278.36</div>
<div class="r" style="left:8px;top:233.2px;width:780px;height:9.400000000000006px;background:#eef3fa;"></div>
<div class="r" style="left:2px;top:241.6px;width:786px;height:1.0px;background:#d8d8d8;"></div>
<div class="r" style="left:8px;top:233.2px;width:1px;height:9.400000000000006px;background:#dcdcdc;"></div>
<div class="r" style="left:177px;top:233.2px;width:1px;height:9.400000000000006px;background:#dcdcdc;"></div>
<div class="r" style="left:226px;top:233.2px;width:1px;height:9.400000000000006px;background:#dcdcdc;"></div>
<div class="r" style="left:267px;top:233.2px;width:1px;height:9.400000000000006px;background:#dcdcdc;"></div>
<div class="r" style="left:308px;top:233.2px;width:1px;height:9.400000000000006px;background:#dcdcdc;"></div>
<div class="r" style="left:349px;top:233.2px;width:1px;height:9.400000000000006px;background:#dcdcdc;"></div>
<div class="r" style="left:408px;top:233.2px;width:1px;height:9.400000000000006px;background:#dcdcdc;"></div>
<div class="r" style="left:490px;top:233.2px;width:1px;height:9.400000000000006px;background:#dcdcdc;"></div>
<div class="r" style="left:540px;top:233.2px;width:1px;height:9.400000000000006px;background:#dcdcdc;"></div>
<div class="r" style="left:582px;top:233.2px;width:1px;height:9.400000000000006px;background:#dcdcdc;"></div>
<div class="r" style="left:623px;top:233.2px;width:1px;height:9.400000000000006px;background:#dcdcdc;"></div>
<div class="r" style="left:664px;top:233.2px;width:1px;height:9.400000000000006px;background:#dcdcdc;"></div>
<div class="r" style="left:705px;top:233.2px;width:1px;height:9.400000000000006px;background:#dcdcdc;"></div>
<div class="r" style="left:747px;top:233.2px;width:1px;height:9.400000000000006px;background:#dcdcdc;"></div>
<div class="t" style="left:10.5px;top:233.30px;font-size:8px;line-height:8px;font-weight:400;color:#161616;transform:scaleX(0.8);transform-origin:0 0;">Сентябрь 2021</div>
<div class="t" style="right:575.8px;top:233.30px;font-size:8px;line-height:8px;font-weight:400;color:#161616;transform:scaleX(0.8);transform-origin:100% 0;">278.36</div>
<div class="t" style="right:534.8px;top:233.30px;font-size:8px;line-height:8px;font-weight:400;color:#161616;transform:scaleX(0.8);transform-origin:100% 0;">278.36</div>
<div class="t" style="right:493.8px;top:233.30px;font-size:8px;line-height:8px;font-weight:400;color:#161616;transform:scaleX(0.8);transform-origin:100% 0;">0.00</div>
<div class="t" style="right:452.8px;top:233.30px;font-size:8px;line-height:8px;font-weight:400;color:#161616;transform:scaleX(0.8);transform-origin:100% 0;">0.00</div>
<div class="t" style="right:393.8px;top:233.30px;font-size:8px;line-height:8px;font-weight:400;color:#161616;transform:scaleX(0.8);transform-origin:100% 0;">278.36</div>
<div class="t" style="right:311.8px;top:233.30px;font-size:8px;line-height:8px;font-weight:400;color:#161616;transform:scaleX(0.8);transform-origin:100% 0;">4</div>
<div class="t" style="right:261.79999999999995px;top:233.30px;font-size:8px;line-height:8px;font-weight:400;color:#161616;transform:scaleX(0.8);transform-origin:100% 0;">0.00</div>
<div class="t" style="right:219.79999999999995px;top:233.30px;font-size:8px;line-height:8px;font-weight:400;color:#161616;transform:scaleX(0.8);transform-origin:100% 0;">0.00</div>
<div class="t" style="right:178.79999999999995px;top:233.30px;font-size:8px;line-height:8px;font-weight:400;color:#161616;transform:scaleX(0.8);transform-origin:100% 0;">0.00</div>
<div class="t" style="right:137.79999999999995px;top:233.30px;font-size:8px;line-height:8px;font-weight:400;color:#161616;transform:scaleX(0.8);transform-origin:100% 0;">278.36</div>
<div class="t" style="right:96.79999999999995px;top:233.30px;font-size:8px;line-height:8px;font-weight:400;color:#161616;transform:scaleX(0.8);transform-origin:100% 0;">278.36</div>
<div class="t" style="right:54.799999999999955px;top:233.30px;font-size:8px;line-height:8px;font-weight:400;color:#161616;transform:scaleX(0.8);transform-origin:100% 0;">0.00</div>
<div class="t" style="right:9.799999999999955px;top:233.30px;font-size:8px;line-height:8px;font-weight:400;color:#161616;transform:scaleX(0.8);transform-origin:100% 0;">278.36</div>
<div class="r" style="left:8px;top:242.6px;width:780px;height:8.900000000000006px;background:#eef3fa;"></div>
<div class="r" style="left:2px;top:250.5px;width:786px;height:1.0px;background:#d8d8d8;"></div>
<div class="r" style="left:8px;top:242.6px;width:1px;height:8.900000000000006px;background:#dcdcdc;"></div>
<div class="r" style="left:177px;top:242.6px;width:1px;height:8.900000000000006px;background:#dcdcdc;"></div>
<div class="r" style="left:226px;top:242.6px;width:1px;height:8.900000000000006px;background:#dcdcdc;"></div>
<div class="r" style="left:267px;top:242.6px;width:1px;height:8.900000000000006px;background:#dcdcdc;"></div>
<div class="r" style="left:308px;top:242.6px;width:1px;height:8.900000000000006px;background:#dcdcdc;"></div>
<div class="r" style="left:349px;top:242.6px;width:1px;height:8.900000000000006px;background:#dcdcdc;"></div>
<div class="r" style="left:408px;top:242.6px;width:1px;height:8.900000000000006px;background:#dcdcdc;"></div>
<div class="r" style="left:490px;top:242.6px;width:1px;height:8.900000000000006px;background:#dcdcdc;"></div>
<div class="r" style="left:540px;top:242.6px;width:1px;height:8.900000000000006px;background:#dcdcdc;"></div>
<div class="r" style="left:582px;top:242.6px;width:1px;height:8.900000000000006px;background:#dcdcdc;"></div>
<div class="r" style="left:623px;top:242.6px;width:1px;height:8.900000000000006px;background:#dcdcdc;"></div>
<div class="r" style="left:664px;top:242.6px;width:1px;height:8.900000000000006px;background:#dcdcdc;"></div>
<div class="r" style="left:705px;top:242.6px;width:1px;height:8.900000000000006px;background:#dcdcdc;"></div>
<div class="r" style="left:747px;top:242.6px;width:1px;height:8.900000000000006px;background:#dcdcdc;"></div>
<div class="t" style="left:10.5px;top:242.70px;font-size:8px;line-height:8px;font-weight:400;color:#161616;transform:scaleX(0.8);transform-origin:0 0;">Август 2021</div>
<div class="t" style="right:575.8px;top:242.70px;font-size:8px;line-height:8px;font-weight:400;color:#161616;transform:scaleX(0.8);transform-origin:100% 0;">487.13</div>
<div class="t" style="right:534.8px;top:242.70px;font-size:8px;line-height:8px;font-weight:400;color:#161616;transform:scaleX(0.8);transform-origin:100% 0;">278.36</div>
<div class="t" style="right:493.8px;top:242.70px;font-size:8px;line-height:8px;font-weight:400;color:#161616;transform:scaleX(0.8);transform-origin:100% 0;">0.00</div>
<div class="t" style="right:452.8px;top:242.70px;font-size:8px;line-height:8px;font-weight:400;color:#161616;transform:scaleX(0.8);transform-origin:100% 0;">0.00</div>
<div class="t" style="right:393.8px;top:242.70px;font-size:8px;line-height:8px;font-weight:400;color:#161616;transform:scaleX(0.8);transform-origin:100% 0;">278.36</div>
<div class="t" style="right:311.8px;top:242.70px;font-size:8px;line-height:8px;font-weight:400;color:#161616;transform:scaleX(0.8);transform-origin:100% 0;">4</div>
<div class="t" style="right:261.79999999999995px;top:242.70px;font-size:8px;line-height:8px;font-weight:400;color:#161616;transform:scaleX(0.8);transform-origin:100% 0;">0.00</div>
<div class="t" style="right:219.79999999999995px;top:242.70px;font-size:8px;line-height:8px;font-weight:400;color:#161616;transform:scaleX(0.8);transform-origin:100% 0;">0.00</div>
<div class="t" style="right:178.79999999999995px;top:242.70px;font-size:8px;line-height:8px;font-weight:400;color:#161616;transform:scaleX(0.8);transform-origin:100% 0;">0.00</div>
<div class="t" style="right:137.79999999999995px;top:242.70px;font-size:8px;line-height:8px;font-weight:400;color:#161616;transform:scaleX(0.8);transform-origin:100% 0;">278.36</div>
<div class="t" style="right:96.79999999999995px;top:242.70px;font-size:8px;line-height:8px;font-weight:400;color:#161616;transform:scaleX(0.8);transform-origin:100% 0;">487.13</div>
<div class="t" style="right:54.799999999999955px;top:242.70px;font-size:8px;line-height:8px;font-weight:400;color:#161616;transform:scaleX(0.8);transform-origin:100% 0;">0.00</div>
<div class="t" style="right:9.799999999999955px;top:242.70px;font-size:8px;line-height:8px;font-weight:400;color:#161616;transform:scaleX(0.8);transform-origin:100% 0;">278.36</div>
<div class="r" style="left:2px;top:214px;width:6px;height:37px;background:#f0f0f0;"></div>
<div class="r" style="left:2px;top:222.5px;width:6px;height:1.0px;background:#d0d0d0;"></div>
<div class="r" style="left:2px;top:232.2px;width:6px;height:1.0px;background:#d0d0d0;"></div>
<div class="r" style="left:2px;top:241.6px;width:6px;height:1.0px;background:#d0d0d0;"></div>
<div class="r" style="left:2px;top:250.5px;width:6px;height:1.0px;background:#d0d0d0;"></div>
<svg class="r" style="left:3px;top:216px" width="4" height="5" viewBox="0 0 4 5"><path d="M0.5 0.3L3.5 2.5L0.5 4.7Z" fill="#202020"/></svg>
<div class="r" style="left:787px;top:214px;width:1px;height:8.5px;background:#fff;"></div>
<div class="r" style="left:787px;top:223.5px;width:1px;height:8.699999999999989px;background:#fff;"></div>
<div class="r" style="left:787px;top:233.2px;width:1px;height:8.400000000000006px;background:#eef3fa;"></div>
<div class="r" style="left:787px;top:242.6px;width:1px;height:7.900000000000006px;background:#eef3fa;"></div>
<div class="r" style="left:788px;top:197px;width:9px;height:178px;background:#f0f0f0;"></div>
<div class="r" style="left:788px;top:207px;width:8px;height:95px;background:#c8c8c8;"></div>
<svg class="r" style="left:790px;top:200.5px" width="5" height="4" viewBox="0 0 5 4"><path d="M0.7 3.3L2.5 1.2L4.3 3.3" stroke="#333" stroke-width="1.2" fill="none"/></svg>
<div class="r" style="left:2px;top:374px;width:786px;height:11px;background:#fff;border-top:1px solid #b8b8b8;border-bottom:1px solid #b8b8b8;box-sizing:border-box;"></div>
<div class="r" style="left:2px;top:375px;width:6px;height:9px;background:#f0f0f0;"></div>
<div class="r" style="left:8px;top:375px;width:1px;height:9px;background:#a8a8a8;"></div>
<div class="r" style="left:177px;top:375px;width:1px;height:9px;background:#a8a8a8;"></div>
<div class="r" style="left:226px;top:375px;width:1px;height:9px;background:#a8a8a8;"></div>
<div class="r" style="left:267px;top:375px;width:1px;height:9px;background:#a8a8a8;"></div>
<div class="r" style="left:308px;top:375px;width:1px;height:9px;background:#a8a8a8;"></div>
<div class="r" style="left:349px;top:375px;width:1px;height:9px;background:#a8a8a8;"></div>
<div class="r" style="left:408px;top:375px;width:1px;height:9px;background:#a8a8a8;"></div>
<div class="r" style="left:490px;top:375px;width:1px;height:9px;background:#a8a8a8;"></div>
<div class="r" style="left:540px;top:375px;width:1px;height:9px;background:#a8a8a8;"></div>
<div class="r" style="left:582px;top:375px;width:1px;height:9px;background:#a8a8a8;"></div>
<div class="r" style="left:623px;top:375px;width:1px;height:9px;background:#a8a8a8;"></div>
<div class="r" style="left:664px;top:375px;width:1px;height:9px;background:#a8a8a8;"></div>
<div class="r" style="left:705px;top:375px;width:1px;height:9px;background:#a8a8a8;"></div>
<div class="r" style="left:747px;top:375px;width:1px;height:9px;background:#a8a8a8;"></div>
<div class="t" style="left:10px;top:376.70px;font-size:8px;line-height:8px;font-weight:400;color:#161616;transform:scaleX(0.8);transform-origin:0 0;">ИТОГО:</div>
<div class="t" style="right:575.8px;top:376.20px;font-size:8px;line-height:8px;font-weight:400;color:#161616;transform:scaleX(0.8);transform-origin:100% 0;">487.13</div>
<div class="t" style="right:534.8px;top:376.20px;font-size:8px;line-height:8px;font-weight:400;color:#161616;transform:scaleX(0.8);transform-origin:100% 0;">835.08</div>
<div class="t" style="right:493.8px;top:376.20px;font-size:8px;line-height:8px;font-weight:400;color:#161616;transform:scaleX(0.8);transform-origin:100% 0;">0.00</div>
<div class="t" style="right:452.8px;top:376.20px;font-size:8px;line-height:8px;font-weight:400;color:#161616;transform:scaleX(0.8);transform-origin:100% 0;">0.00</div>
<div class="t" style="right:393.8px;top:376.20px;font-size:8px;line-height:8px;font-weight:400;color:#161616;transform:scaleX(0.8);transform-origin:100% 0;">835.08</div>
<div class="t" style="right:311.8px;top:376.20px;font-size:8px;line-height:8px;font-weight:400;color:#161616;transform:scaleX(0.8);transform-origin:100% 0;">12</div>
<div class="t" style="right:261.79999999999995px;top:376.20px;font-size:8px;line-height:8px;font-weight:400;color:#161616;transform:scaleX(0.8);transform-origin:100% 0;">0.00</div>
<div class="t" style="right:219.79999999999995px;top:376.20px;font-size:8px;line-height:8px;font-weight:400;color:#161616;transform:scaleX(0.8);transform-origin:100% 0;">0.00</div>
<div class="t" style="right:178.79999999999995px;top:376.20px;font-size:8px;line-height:8px;font-weight:400;color:#161616;transform:scaleX(0.8);transform-origin:100% 0;">0.00</div>
<div class="t" style="right:137.79999999999995px;top:376.20px;font-size:8px;line-height:8px;font-weight:400;color:#161616;transform:scaleX(0.8);transform-origin:100% 0;">835.08</div>
<div class="t" style="right:96.79999999999995px;top:376.20px;font-size:8px;line-height:8px;font-weight:400;color:#161616;transform:scaleX(0.8);transform-origin:100% 0;">1043.85</div>
<div class="t" style="right:54.799999999999955px;top:376.20px;font-size:8px;line-height:8px;font-weight:400;color:#161616;transform:scaleX(0.8);transform-origin:100% 0;">0.00</div>
<div class="t" style="right:9.799999999999955px;top:376.20px;font-size:8px;line-height:8px;font-weight:400;color:#161616;transform:scaleX(0.8);transform-origin:100% 0;">278.36</div>
<div class="r" style="left:788px;top:375px;width:9px;height:10px;background:#f0f0f0;"></div>
<div class="r" style="left:787px;top:375px;width:1px;height:9px;background:#fff;"></div>
<svg class="r" style="left:790px;top:377.5px" width="5" height="4" viewBox="0 0 5 4"><path d="M0.7 0.7L2.5 2.8L4.3 0.7" stroke="#333" stroke-width="1.2" fill="none"/></svg>
<div class="r" style="left:1px;top:385px;width:797px;height:9px;background:#f0f0f0;border-left:1px solid #a8a8a8;border-right:1px solid #c8c8c8;box-sizing:border-box;"></div>
<div class="r" style="left:12px;top:386px;width:760px;height:7.5px;background:#cdcdcd;"></div>
<svg class="r" style="left:5px;top:387.5px" width="4" height="5" viewBox="0 0 4 5"><path d="M3.2 0.6L1.2 2.5L3.2 4.4" stroke="#333" stroke-width="1.2" fill="none"/></svg>
<svg class="r" style="left:780px;top:387.5px" width="4" height="5" viewBox="0 0 4 5"><path d="M0.8 0.6L2.8 2.5L0.8 4.4" stroke="#333" stroke-width="1.2" fill="none"/></svg>
<div class="r" style="left:0px;top:395px;width:800px;height:1px;background:#e6e6e6;"></div>
<div class="r" style="left:0px;top:396px;width:29px;height:12px;background:#fff;"></div>
<div class="t" style="left:4px;top:399.20px;font-size:8px;line-height:8px;font-weight:400;color:#161616;transform:scaleX(0.8);transform-origin:0 0;">Баланс</div>
<div class="r" style="left:29px;top:396px;width:42px;height:11px;background:#ebebeb;"></div>
<div class="t" style="left:32.5px;top:397.70px;font-size:8px;line-height:8px;font-weight:400;color:#161616;transform:scaleX(0.8);transform-origin:0 0;">По счетчику</div>
<div class="r" style="left:0px;top:407px;width:800px;height:1px;background:#d8d8d8;"></div>
<div class="r" style="left:0px;top:408px;width:800px;height:1px;background:#8a8a8a;"></div>
</body></html>
